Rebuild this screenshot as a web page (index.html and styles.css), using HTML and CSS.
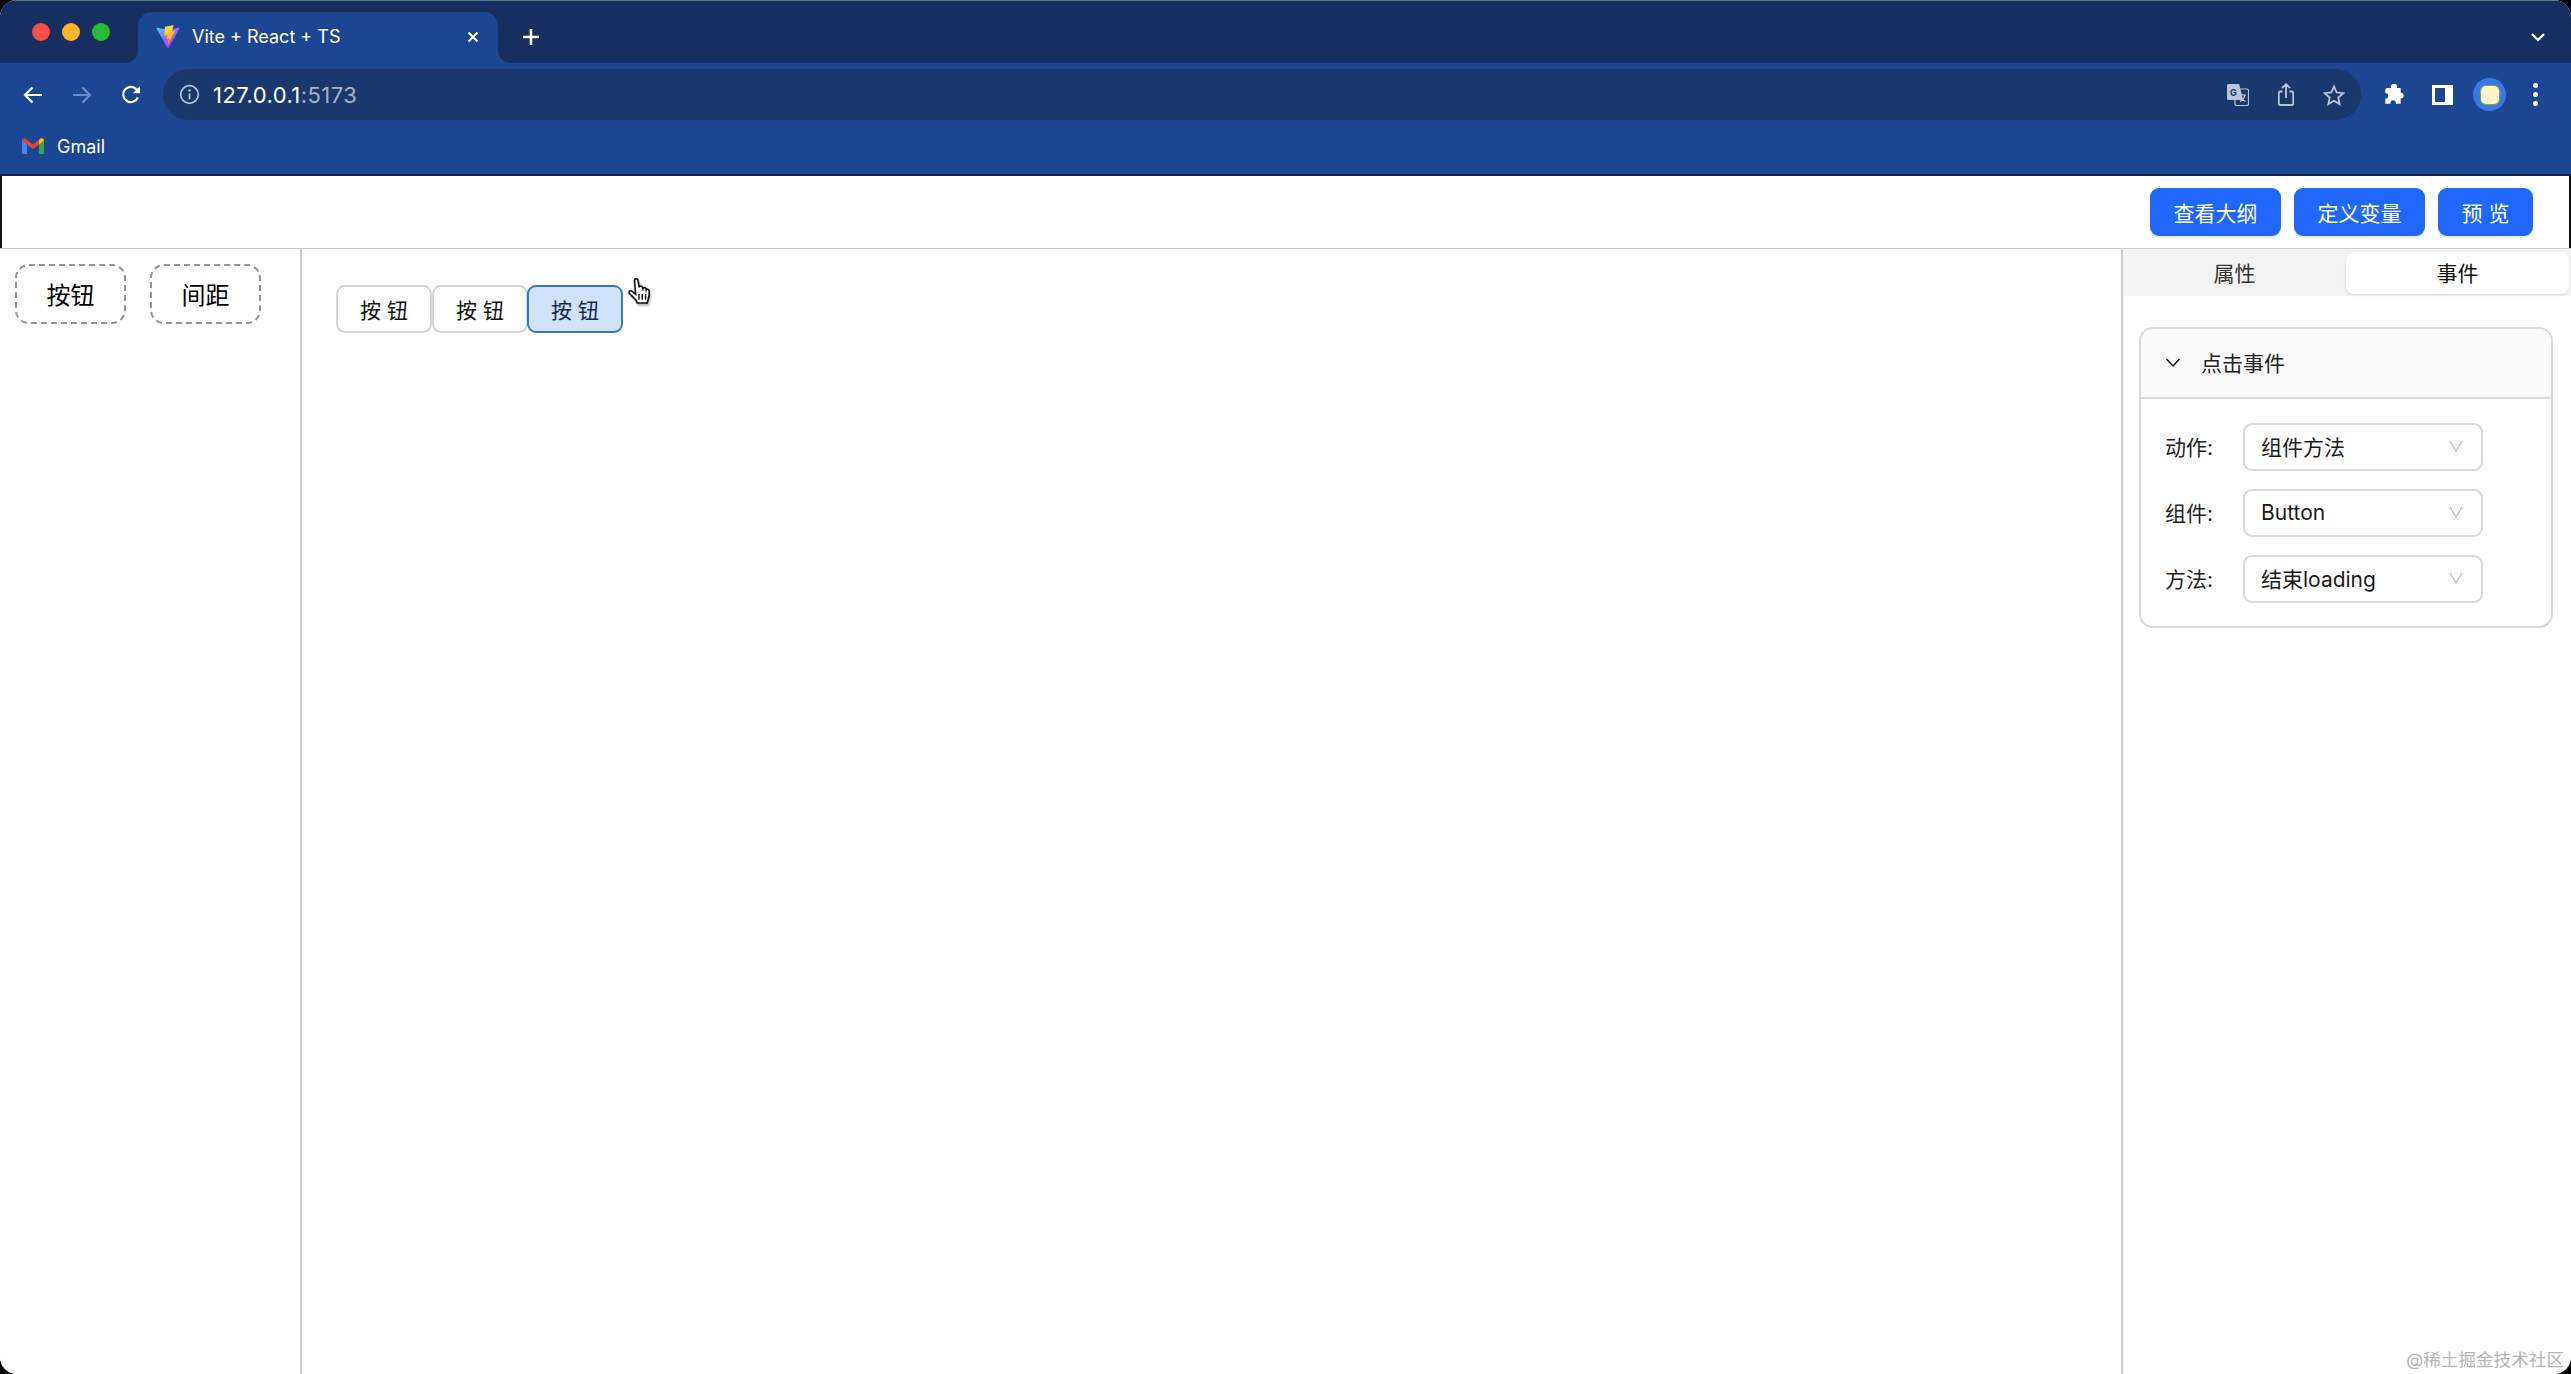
FILE: index.html
```html
<!DOCTYPE html>
<html lang="zh-CN">
<head>
<meta charset="utf-8">
<title>Vite + React + TS</title>
<link rel="stylesheet" href="styles.css">
</head>
<body>
<div class="window">
  <div class="tabstrip">
    <div class="lights"><i class="light red"></i><i class="light yellow"></i><i class="light green"></i></div>
    <div class="tab">
      <svg class="vite" viewBox="0 0 410 404"><defs><linearGradient id="va" x1="6" y1="33" x2="235" y2="344" gradientUnits="userSpaceOnUse"><stop stop-color="#41D1FF"/><stop offset="1" stop-color="#BD34FE"/></linearGradient><linearGradient id="vb" x1="194" y1="8" x2="236" y2="292" gradientUnits="userSpaceOnUse"><stop stop-color="#FFEA83"/><stop offset=".08" stop-color="#FFDD35"/><stop offset="1" stop-color="#FFA800"/></linearGradient></defs><path fill="url(#va)" d="M399.641 59.5246L215.643 388.545C211.844 395.338 202.084 395.378 198.228 388.618L10.5817 59.5563C6.38087 52.1896 12.6802 43.2665 21.0281 44.7586L205.223 77.6824C206.398 77.8924 207.601 77.8904 208.776 77.6763L389.119 44.8058C397.439 43.2894 403.768 52.1434 399.641 59.5246Z"/><path fill="url(#vb)" d="M292.965 1.5744L156.801 28.2552C154.563 28.6937 152.906 30.5903 152.771 32.8664L144.395 174.33C144.198 177.662 147.258 180.248 150.51 179.498L188.42 170.749C191.967 169.931 195.172 173.055 194.443 176.622L183.18 231.775C182.422 235.487 185.907 238.661 189.532 237.56L212.947 230.446C216.577 229.344 220.065 232.527 219.297 236.242L201.398 322.875C200.278 328.294 207.486 331.249 210.492 326.603L212.5 323.5L323.454 102.072C325.312 98.3645 322.108 94.137 318.036 94.9228L279.014 102.454C275.347 103.161 272.227 99.746 273.262 96.1583L298.731 7.86689C299.767 4.27314 296.636 0.855181 292.965 1.5744Z"/></svg>
      <span class="tab-title">Vite + React + TS</span>
      <svg class="tab-close" viewBox="0 0 12 12"><path d="M1.5 1.5l9 9M10.5 1.5l-9 9"/></svg>
    </div>
    <svg class="new-tab" viewBox="0 0 18 18"><path d="M9 1v16M1 9h16"/></svg>
    <svg class="tab-menu" viewBox="0 0 16 10"><path d="M2 2l6 6 6-6"/></svg>
  </div>

  <div class="toolbar">
    <div class="nav">
      <svg class="nav-icon" viewBox="0 0 20 18"><path d="M19 9H2M9.5 1.5L2 9l7.5 7.5"/></svg>
      <svg class="nav-icon dim" viewBox="0 0 20 18"><path d="M1 9h17M10.5 1.5L18 9l-7.5 7.5"/></svg>
      <svg class="nav-icon reload" viewBox="0 0 20 20"><path d="M16.8 12.5A7.6 7.6 0 1 1 15.6 4.6"/><path class="solid" d="M19 1v7.2h-7.2z"/></svg>
    </div>
    <div class="omnibox">
      <svg class="info" viewBox="0 0 22 22"><circle cx="11" cy="11" r="9.2"/><path d="M11 10v6"/><circle class="solid" cx="11" cy="6.7" r="1.3"/></svg>
      <span class="url">127.0.0.1<span class="port">:5173</span></span>
      <div class="omni-actions">
        <svg class="omni-icon" viewBox="0 0 22 22"><rect class="t-back" x="8" y="5" width="13.5" height="16.5" rx="1.5"/><path class="t-front" d="M1.5 0h10.6l4 16H1.5A1.5 1.5 0 0 1 0 14.500V1.500A1.500 1.500 0 0 1 1.500 0z"/><text class="t-g" x="3" y="11.500">G</text><path class="t-x" d="M12 11h7M15.500 10v1.500M18 11c-1 3.500-3 5.500-5 6.500M13.500 13c1 2 2.500 3.500 5 4.500"/></svg>
        <svg class="omni-icon share" viewBox="0 0 16 23"><path d="M4.500 8.500H2A1.300 1.300 0 0 0 .8 9.800v10.900A1.300 1.300 0 0 0 2 22h12a1.300 1.300 0 0 0 1.200-1.300V9.800A1.300 1.300 0 0 0 14 8.500h-2.500M8 15V1.500M4 5.200L8 1.200l4 4"/></svg>
        <svg class="omni-icon" viewBox="0 0 22 21"><path d="M11 1.900l2.700 6.100 6.600.7-5 4.400 1.400 6.500-5.700-3.300-5.700 3.300 1.400-6.500-5-4.400 6.600-.7z"/></svg>
      </div>
    </div>
    <div class="extensions">
      <svg class="puzzle" viewBox="0 0 20 19"><path d="M5 3.500h3.300a2.900 2.900 0 1 1 5.400 0H17v4.300a2.700 2.700 0 1 1 0 5.400V18h-4.500a2.500 2.500 0 1 0-4.800 0H3v-4.700a2.600 2.600 0 1 0 0-5.200V5.500a2 2 0 0 1 2-2z"/></svg>
      <div class="side-panel"><i class="side-panel-hole"></i></div>
      <div class="avatar"><i class="avatar-face"></i></div>
      <div class="kebab"><i></i><i></i><i></i></div>
    </div>
  </div>

  <div class="bookmarks">
    <svg class="gmail" viewBox="0 0 22 16"><path fill="#4285f4" d="M0 2v12.500A1.500 1.500 0 0 0 1.500 16H5V6z"/><path fill="#34a853" d="M17 6v10h3.500a1.500 1.500 0 0 0 1.500-1.500V2z"/><path fill="#ea4335" d="M0 2.500C0 .5 2 -.5 3.500 .6L11 6.400 18.500 .6C20 -.5 22 .5 22 2.500L17 6.500 11 11 5 6.500z"/><path fill="#fbbc04" d="M17 2.300L18.500 .6C20 -.5 22 .5 22 2.500L17 6.500z"/></svg>
    <span class="bookmark-label">Gmail</span>
  </div>
  <div class="chrome-line"></div>

  <header class="page-header">
    <button class="primary wide">查看大纲</button>
    <button class="primary wide">定义变量</button>
    <button class="primary narrow">预 览</button>
  </header>

  <div class="workspace">
    <aside class="palette">
      <div class="palette-item">按钮</div>
      <div class="palette-item">间距</div>
    </aside>
    <main class="canvas">
      <button class="canvas-btn">按 钮</button>
      <button class="canvas-btn">按 钮</button>
      <button class="canvas-btn selected">按 钮</button>
    </main>
    <section class="inspector">
      <div class="segmented">
        <div class="segment">属性</div>
        <div class="segment active">事件</div>
      </div>
      <div class="card">
        <div class="card-head">
          <svg class="card-caret" viewBox="0 0 16 10"><path d="M1.500 1.500L8 8.500l6.500-7"/></svg>
          <span>点击事件</span>
        </div>
        <div class="card-body">
          <div class="field"><label>动作:</label><div class="select"><span>组件方法</span><svg class="select-caret" viewBox="0 0 14 12"><path d="M1 1l6 10 6-10"/></svg></div></div>
          <div class="field"><label>组件:</label><div class="select"><span>Button</span><svg class="select-caret" viewBox="0 0 14 12"><path d="M1 1l6 10 6-10"/></svg></div></div>
          <div class="field"><label>方法:</label><div class="select"><span>结束loading</span><svg class="select-caret" viewBox="0 0 14 12"><path d="M1 1l6 10 6-10"/></svg></div></div>
        </div>
      </div>
    </section>
  </div>

  <svg class="hand" viewBox="0 0 22 27"><path d="M6.500 2.200c0-1.800 3-1.800 3.200 0l1 6.300c.2-1.500 2.700-1.500 3 0l.3 1c.3-1.300 2.500-1.300 2.800.2l.2 1c.5-1 2.600-.9 2.700.8.200 2.700.2 5.300-.8 7.500l-1 3.500H9l-1-2.500L2 14c-1.300-1.500.4-3.200 2-2.200l3.500 2.700z"/><path class="hand-lines" d="M10.500 14.500v5M13.500 14.500v5M16.500 14.500v5"/></svg>
  <div class="watermark">@稀土掘金技术社区</div>
</div>
</body>
</html>
```

FILE: styles.css
```css
* { box-sizing: border-box; }
html, body { margin: 0; height: 100%; background: #000; }
body { font-family: Inter, "Noto Sans CJK SC", sans-serif; overflow: hidden; }
svg { display: block; flex: none; }

.window {
  position: relative;
  width: 2571px;
  height: 1374px;
  display: flex;
  flex-direction: column;
  overflow: hidden;
  border-radius: 17px;
  background: #fff;
}

/* browser chrome */
.tabstrip {
  height: 63px;
  flex: none;
  display: flex;
  align-items: flex-end;
  background: #172f60;
  border-top: 1px solid #5d7a8e;
}
.lights { align-self: flex-start; display: flex; gap: 12px; margin: 22px 0 0 32px; width: 106px; }
.light { width: 18px; height: 18px; border-radius: 50%; }
.red { background: #fb4f47; }
.yellow { background: #fdb42a; }
.green { background: #27bb38; }
.tab {
  position: relative;
  width: 360px;
  height: 51px;
  display: flex;
  align-items: center;
  padding: 0 18px 2px 18px;
  background: #1c4691;
  border-radius: 14px 14px 0 0;
  color: #fff;
}
.tab::before, .tab::after {
  content: "";
  position: absolute;
  bottom: 0;
  width: 12px;
  height: 12px;
}
.tab::before { left: -12px; background: radial-gradient(circle at 0 0, transparent 11.500px, #1c4691 12px); }
.tab::after { right: -12px; background: radial-gradient(circle at 100% 0, transparent 11.500px, #1c4691 12px); }
.vite { width: 24px; height: 24px; }
.tab-title { margin-left: 12px; font-size: 18px; flex: 1; white-space: nowrap; }
.tab-close { width: 12px; height: 12px; margin-right: 1px; fill: none; stroke: #fff; stroke-width: 2; }
.new-tab { width: 18px; height: 18px; margin: 0 0 17px 24px; fill: none; stroke: #fff; stroke-width: 2.600; }
.tab-menu { width: 16px; height: 10px; margin: 0 25px 21px auto; fill: none; stroke: #fff; stroke-width: 2.200; }

.toolbar {
  height: 57px;
  flex: none;
  display: flex;
  align-items: flex-start;
  background: #1c4691;
  padding-top: 6px;
}
.nav { display: flex; align-items: center; width: 163px; height: 51px; padding-left: 23px; gap: 29px; }
.nav-icon { width: 20px; height: 18px; fill: none; stroke: #fff; stroke-width: 2.200; }
.nav-icon.dim { stroke: #6d8fc7; }
.nav-icon.reload { height: 20px; }
.solid { fill: #fff; stroke: none; }
.omnibox {
  width: 2198px;
  height: 51px;
  display: flex;
  align-items: center;
  padding-left: 16px;
  background: #1b386c;
  border-radius: 26px;
}
.info { width: 21px; height: 21px; fill: none; stroke: #b6c3da; stroke-width: 1.800; }
.info .solid { fill: #b6c3da; }
.url { margin-left: 13px; font-size: 22px; letter-spacing: .45px; color: #fff; }
.port { color: #a3b2cd; }
.omni-actions { margin-left: auto; margin-right: 16px; display: flex; align-items: center; gap: 29px; }
.omni-icon { width: 22px; height: 22px; fill: none; stroke: #b9c5da; stroke-width: 1.800; }
.omni-icon.share { width: 16px; height: 23px; }
.t-back { fill: #1b386c; stroke: #b9c5da; stroke-width: 1.200; }
.t-front { fill: #b9c5da; stroke: none; }
.t-g { font-size: 9px; font-weight: 700; fill: #1b386c; stroke: none; font-family: Inter, sans-serif; }
.t-x { stroke-width: 1.200; }
.extensions { display: flex; align-items: center; height: 51px; padding-left: 21px; }
.puzzle { width: 22px; height: 21px; fill: #fff; }
.side-panel { margin-left: 28px; width: 21px; height: 20px; background: #fff; padding: 3px 8px 3px 3px; }
.side-panel-hole { display: block; width: 10px; height: 14px; background: #1c4691; }
.avatar { margin-left: 20px; width: 33px; height: 33px; border-radius: 50%; background: #3b78e7; display: flex; align-items: center; justify-content: center; }
.avatar-face { width: 18px; height: 18px; border-radius: 5px; background: #fdf2c8; box-shadow: 0 0 0 1px #7fa83f; }
.kebab { margin-left: 27px; display: flex; flex-direction: column; gap: 4px; }
.kebab i { width: 5px; height: 5px; border-radius: 50%; background: #fff; }

.bookmarks {
  height: 54px;
  flex: none;
  display: flex;
  align-items: center;
  padding: 0 0 2px 22px;
  background: #1c4691;
}
.gmail { width: 22px; height: 16px; }
.bookmark-label { margin-left: 13px; font-size: 18px; color: #fff; }
.chrome-line { height: 2px; flex: none; background: #11244a; }

/* page header */
.page-header {
  height: 72px;
  flex: none;
  display: flex;
  justify-content: flex-end;
  gap: 13px;
  padding: 12px 36px 0 0;
  background: #fff;
  border-left: 2px solid #111;
  border-right: 2px solid #111;
}
button { font-family: inherit; cursor: pointer; }
.primary {
  height: 48px;
  border: 0;
  border-radius: 9px;
  background: #2068fd;
  color: #fff;
  font-size: 21px;
  padding: 0;
  box-shadow: 0 2px 0 rgba(32, 104, 253, .12);
}
.wide { width: 131px; }
.narrow { width: 95px; }

/* workspace */
.workspace { flex: 1; min-height: 0; display: flex; border-top: 1px solid #ccc; background: #fff; }
.palette { width: 302px; flex: none; display: flex; align-items: flex-start; gap: 24px; padding: 15px 0 0 15px; border-right: 2px solid #ccc; }
.palette-item {
  width: 111px;
  height: 60px;
  display: flex;
  align-items: center;
  justify-content: center;
  padding-bottom: 2px;
  border: 2px dashed #949494;
  border-radius: 14px;
  font-size: 24px;
  color: #000;
}
.canvas { flex: 1; display: flex; align-items: flex-start; padding: 36px 0 0 34px; }
.canvas-btn {
  width: 96px;
  height: 48px;
  padding: 0;
  background: #fff;
  border: 2px solid #d4d4d4;
  border-radius: 9px;
  font-size: 21px;
  color: #111;
}
.canvas-btn.selected { margin-left: -1px; background: #cfe2f9; border-color: #3a75c9; color: #13294d; }

.inspector { width: 450px; flex: none; border-left: 2px solid #ccc; }
.segmented { height: 47px; display: flex; padding: 3px 2px 2px 0; background: #f3f3f3; }
.segment { flex: 1; display: flex; align-items: center; justify-content: center; padding-bottom: 2px; font-size: 21px; color: #333; border-radius: 8px; }
.segment.active { background: #fff; color: #111; box-shadow: 0 1px 3px rgba(0, 0, 0, .1); }
.card { width: 414px; margin: 31px 0 0 16px; border: 2px solid #d9d9d9; border-radius: 14px; overflow: hidden; }
.card-head { height: 70px; display: flex; align-items: center; padding: 0 0 2px 24px; gap: 20px; background: #fafafa; border-bottom: 2px solid #d9d9d9; font-size: 21px; color: #222; }
.card-caret { width: 16px; height: 11px; fill: none; stroke: #111; stroke-width: 1.500; }
.card-body { display: flex; flex-direction: column; gap: 18px; padding: 24px 0 23px 24px; }
.field { display: flex; align-items: center; }
.field label { width: 78px; padding-bottom: 2px; font-size: 21px; color: #222; }
.select { width: 240px; height: 48px; display: flex; align-items: center; justify-content: space-between; padding: 0 18px 2px 16px; border: 2px solid #d9d9d9; border-radius: 9px; font-size: 21px; color: #1a1a1a; }
.select-caret { width: 14px; height: 12px; fill: none; stroke: #bdbdbd; stroke-width: 1.300; }

/* overlays */
.hand { position: absolute; left: 627px; top: 278px; width: 25px; height: 30px; fill: #fff; stroke: #111; stroke-width: 1.500; filter: drop-shadow(1px 2px 1px rgba(0, 0, 0, .3)); }
.hand-lines { fill: none; stroke-width: 1.300; }
.watermark { position: absolute; right: 7px; bottom: 3px; font-size: 17.600px; line-height: 22px; color: #b5b5b5; }
```
